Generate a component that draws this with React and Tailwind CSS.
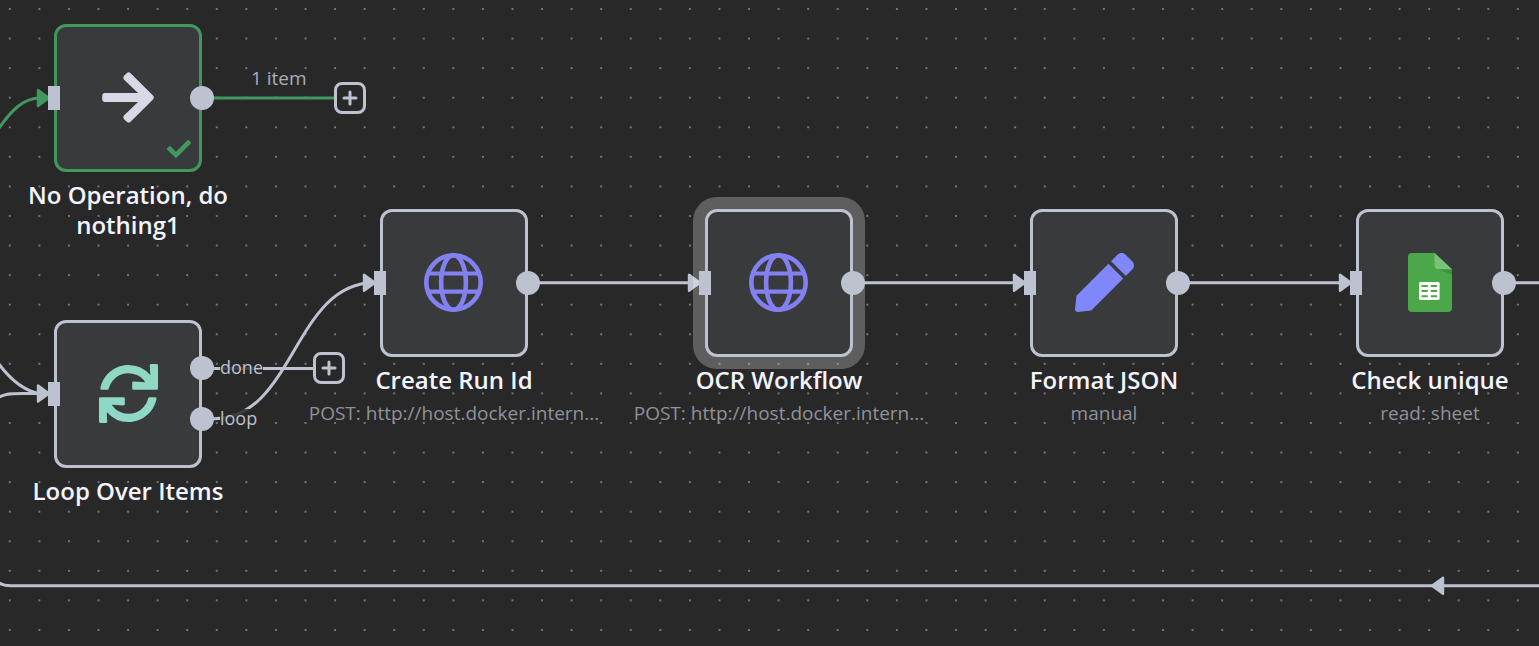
import { FaArrowRight, FaCheck, FaPen, FaSync } from "react-icons/fa";

function GlobeIcon() {
  return (
    <svg viewBox="0 0 60 59" className="h-[59px] w-15" fill="none" stroke="#8380f0" strokeWidth="4.6" aria-hidden="true">
      <circle cx="29.5" cy="29.5" r="27.2" />
      <ellipse cx="29.5" cy="29.5" rx="12.4" ry="27.2" />
      <path d="M4 20.500H55M4 38.700H55" strokeWidth="4.2" />
    </svg>
  );
}

function SheetIcon() {
  return (
    <svg viewBox="0 0 44 59" className="h-[59px] w-11" aria-hidden="true">
      <path d="M4 0H26.500L44 16.500V55a4 4 0 0 1-4 4H4a4 4 0 0 1-4-4V4a4 4 0 0 1 4-4Z" fill="#4ba748" />
      <path d="M28 15.500L44 21.500V16L30 14Z" fill="#3d8f3b" />
      <path d="M26.500 0L44 16.200H30.500a4 4 0 0 1-4-4Z" fill="#78c377" />
      <rect x="11" y="29" width="20.600" height="18" rx="1.400" fill="#fff" />
      <path d="M13.500 33h6.300M22.800 33h6.300M13.500 38.100h6.300M22.800 38.100h6.300M13.500 43.200h6.300M22.800 43.200h6.300" stroke="#4ba748" strokeWidth="2" />
    </svg>
  );
}

const nodes = [
  {
    id: "noop",
    title: "No Operation, do nothing1",
    place: "left-[54px] top-6",
    border: "border-[#41985f]",
    icon: <FaArrowRight className="h-[59px] w-[52px] text-[#d7dae6]" />,
    outputs: ["top-[59px]"],
    done: true,
  },
  {
    id: "loop",
    title: "Loop Over Items",
    place: "left-[54px] top-80",
    border: "border-[#bcc2cf]",
    icon: <FaSync className="size-[59px] text-[#8fd8c6]" />,
    outputs: ["top-[33px]", "top-[84px]"],
  },
  {
    id: "create",
    title: "Create Run Id",
    subtitle: "POST: http://host.docker.intern...",
    place: "left-[380px] top-[209px]",
    border: "border-[#bcc2cf]",
    icon: <GlobeIcon />,
    outputs: ["top-[59px]"],
  },
  {
    id: "ocr",
    title: "OCR Workflow",
    subtitle: "POST: http://host.docker.intern...",
    place: "left-[705px] top-[209px]",
    border: "border-[#bcc2cf] ring-[12px] ring-white/25",
    icon: <GlobeIcon />,
    outputs: ["top-[59px]"],
  },
  {
    id: "format",
    title: "Format JSON",
    subtitle: "manual",
    place: "left-[1030px] top-[209px]",
    border: "border-[#bcc2cf]",
    icon: <FaPen className="size-[59px] text-[#8087fb]" />,
    outputs: ["top-[59px]"],
  },
  {
    id: "check",
    title: "Check unique",
    subtitle: "read: sheet",
    place: "left-[1356px] top-[209px]",
    border: "border-[#bcc2cf]",
    icon: <SheetIcon />,
    outputs: ["top-[59px]"],
  },
];

function Node({ node }) {
  return (
    <section className={`absolute w-[148px] ${node.place}`}>
      <div className={`relative flex h-[148px] items-center justify-center rounded-xl border-3 bg-[#393a3c] pb-px ${node.border}`}>
        {node.icon}
        {node.done && <FaCheck className="absolute right-2 bottom-2 size-6 text-[#41985f]" />}
        <span className="absolute top-[59px] -left-[9px] h-6 w-3 bg-[#bcc2cf]" />
        {node.outputs.map((top) => (
          <span key={top} className={`absolute -right-[15px] size-6 rounded-full bg-[#bcc2cf] ${top}`} />
        ))}
      </div>
      <div className="-mx-[74px] mt-2 flex flex-col items-center text-center">
        <h2 className="max-w-[222px] text-2xl leading-[30px] font-semibold text-[#f2f4ff]">{node.title}</h2>
        {node.subtitle && (
          <p className="mt-1 text-[19px] leading-7 whitespace-nowrap text-[#8f929c]">{node.subtitle}</p>
        )}
      </div>
    </section>
  );
}

function Arrow({ x, y, color = "#bcc2cf", flip = false }) {
  return (
    <path
      d="M0 0L-11 -8V8Z"
      transform={`translate(${x} ${y})${flip ? " rotate(180)" : ""}`}
      fill={color}
      stroke={color}
      strokeWidth="2.4"
      strokeLinejoin="round"
    />
  );
}

function Edges() {
  return (
    <svg className="absolute inset-0 size-full" fill="none" stroke="#bcc2cf" strokeWidth="3" aria-hidden="true">
      <defs>
        <pattern id="dots" x="-5" y="-5.800" width="29.570" height="29.570" patternUnits="userSpaceOnUse">
          <circle cx="14.800" cy="14.800" r="0.900" fill="#9a9a9a" stroke="none" />
        </pattern>
      </defs>
      <rect width="100%" height="100%" fill="url(#dots)" stroke="none" />
      <path d="M-3 131C12 109 24 98 40 98" stroke="#41985f" />
      <path d="M202 98H336" stroke="#41985f" />
      <path d="M-4 360C10 380 24 391 40 393.500" />
      <path d="M-4 399C4 393.500 10 393.500 22 393.500H40" />
      <path d="M202 368.500H315" />
      <path d="M202 418.700H214C294 418.700 294 282.700 374 282.700" />
      <path d="M528 282.700H695M853 282.700H1020M1178 282.700H1345M1503 282.700H9000" />
      <path d="M-10 562Q-10 585.700 11 585.700H9000" />
      <Arrow x={49} y={98} color="#41985f" />
      <Arrow x={49} y={393.5} />
      <Arrow x={375} y={282.7} />
      <Arrow x={700} y={282.7} />
      <Arrow x={1025} y={282.7} />
      <Arrow x={1351} y={282.7} />
      <Arrow x={1432} y={585.7} flip />
    </svg>
  );
}

function AddButton({ place }) {
  return (
    <button
      type="button"
      aria-label="Add node"
      className={`absolute flex size-8 items-center justify-center rounded-lg border-3 border-[#bcc2cf] bg-[#282828] ${place}`}
    >
      <svg viewBox="0 0 16 16" className="size-4" stroke="#bcc2cf" strokeWidth="3" strokeLinecap="round" aria-hidden="true">
        <path d="M8 2V14M2 8H14" />
      </svg>
    </button>
  );
}

export default function App() {
  return (
    <main className="relative h-screen w-full overflow-hidden bg-[#282828] font-['Open_Sans','Noto_Sans',sans-serif]">
      <Edges />
      {nodes.map((node) => (
        <Node key={node.id} node={node} />
      ))}
      <span className="absolute top-[66px] left-[251px] text-[19px] leading-6 text-[#a9adba]">1 item</span>
      <span className="absolute top-[358px] left-[220px] bg-[#282828]/85 text-lg leading-[18px] text-[#bcc2cf]">done</span>
      <span className="absolute top-[409px] left-[220px] bg-[#282828]/85 text-lg leading-[18px] text-[#bcc2cf]">loop</span>
      <AddButton place="top-[82px] left-[334px]" />
      <AddButton place="top-[352px] left-[313px]" />
    </main>
  );
}
